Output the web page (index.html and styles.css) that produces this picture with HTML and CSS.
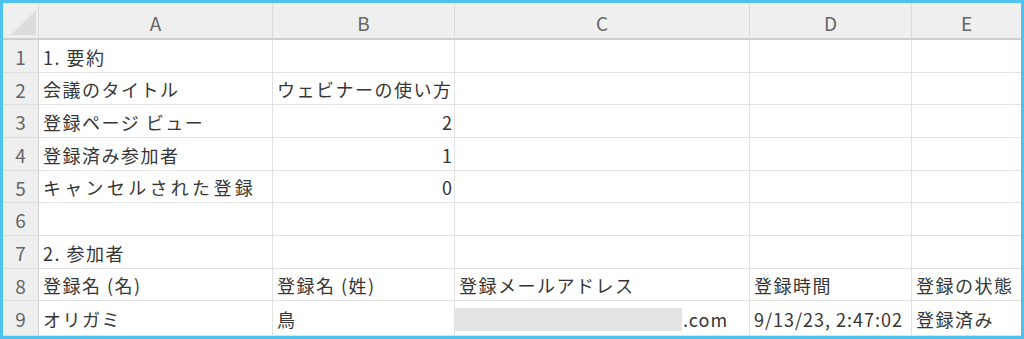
FILE: index.html
```html
<!DOCTYPE html>
<html lang="ja">
<head>
<meta charset="utf-8">
<link rel="stylesheet" href="styles.css">
</head>
<body>
<div class="frame">
  <div class="sheet">
    <div class="corner"><span class="tri"></span></div>
    <div class="colh">A</div><div class="colh">B</div><div class="colh">C</div><div class="colh">D</div><div class="colh last">E</div>

    <div class="rowh">1</div><div class="c">1. 要約</div><div class="c"></div><div class="c"></div><div class="c"></div><div class="c last"></div>
    <div class="rowh">2</div><div class="c">会議のタイトル</div><div class="c">ウェビナーの使い方</div><div class="c"></div><div class="c"></div><div class="c last"></div>
    <div class="rowh">3</div><div class="c">登録ページ ビュー</div><div class="c num">2</div><div class="c"></div><div class="c"></div><div class="c last"></div>
    <div class="rowh">4</div><div class="c">登録済み参加者</div><div class="c num">1</div><div class="c"></div><div class="c"></div><div class="c last"></div>
    <div class="rowh">5</div><div class="c wide">キャンセルされた登録</div><div class="c num">0</div><div class="c"></div><div class="c"></div><div class="c last"></div>
    <div class="rowh">6</div><div class="c"></div><div class="c"></div><div class="c"></div><div class="c"></div><div class="c last"></div>
    <div class="rowh">7</div><div class="c">2. 参加者</div><div class="c"></div><div class="c"></div><div class="c"></div><div class="c last"></div>
    <div class="rowh">8</div><div class="c">登録名 (名)</div><div class="c">登録名 (姓)</div><div class="c">登録メールアドレス</div><div class="c">登録時間</div><div class="c last">登録の状態</div>
    <div class="rowh">9</div><div class="c">オリガミ</div><div class="c">鳥</div><div class="c email"><span class="redact"></span><span class="latin">.com</span></div><div class="c latin">9/13/23, 2:47:02</div><div class="c last">登録済み</div>
  </div>
</div>
</body>
</html>
```
FILE: styles.css
```css
html, body {
  margin: 0;
  padding: 0;
  background: #ffffff;
}
.frame {
  width: 1024px;
  height: 339px;
  box-sizing: border-box;
  border: 3px solid #4ec3f2;
  overflow: hidden;
  background: #ffffff;
}
.sheet {
  display: grid;
  grid-template-columns: 36px 234px 182px 295px 162px 109px;
  grid-template-rows: 37px 33px 32px 33px 33px 32px 33px 33px 32px 35px;
  font-family: "Noto Sans CJK JP", "Noto Sans", sans-serif;
  font-size: 18px;
  color: #363636;
}
.corner {
  background: #efefef;
  border-right: 1px solid #dadada;
  border-bottom: 2px solid #cfcfcf;
  position: relative;
}
.tri {
  position: absolute;
  right: 2px;
  bottom: 3px;
  width: 0;
  height: 0;
  border-left: 25px solid transparent;
  border-bottom: 25px solid #dcdcdc;
}
.colh {
  background: #efefef;
  border-right: 1px solid #dadada;
  border-bottom: 2px solid #cfcfcf;
  display: flex;
  align-items: center;
  justify-content: center;
  padding-top: 4px;
  color: #666666;
  font-size: 19px;
}
.colh.last { border-right: none; }
.rowh {
  background: #efefef;
  border-right: 1px solid #cfcfcf;
  border-bottom: 1px solid #dedede;
  display: flex;
  align-items: center;
  justify-content: center;
  color: #666666;
  padding-top: 1px;
  font-size: 19px;
}
.c {
  border-right: 1px solid #e2e2e2;
  border-bottom: 1px solid #e2e2e2;
  display: flex;
  align-items: center;
  padding: 1px 4px 0 4px;
  white-space: nowrap;
  overflow: visible;
  min-width: 0;
  letter-spacing: 1.5px;
}
.c.last { border-right: none; }
.c.num { justify-content: flex-end; padding-right: 2px; letter-spacing: 0; }
.c.wide { letter-spacing: 3.3px; }
.c.email { padding-left: 0; }
.latin { letter-spacing: 1px; }
.redact {
  display: inline-block;
  width: 227px;
  height: 23px;
  background: #e3e3e3;
  margin-top: 2px;
  margin-right: 1px;
}
```
